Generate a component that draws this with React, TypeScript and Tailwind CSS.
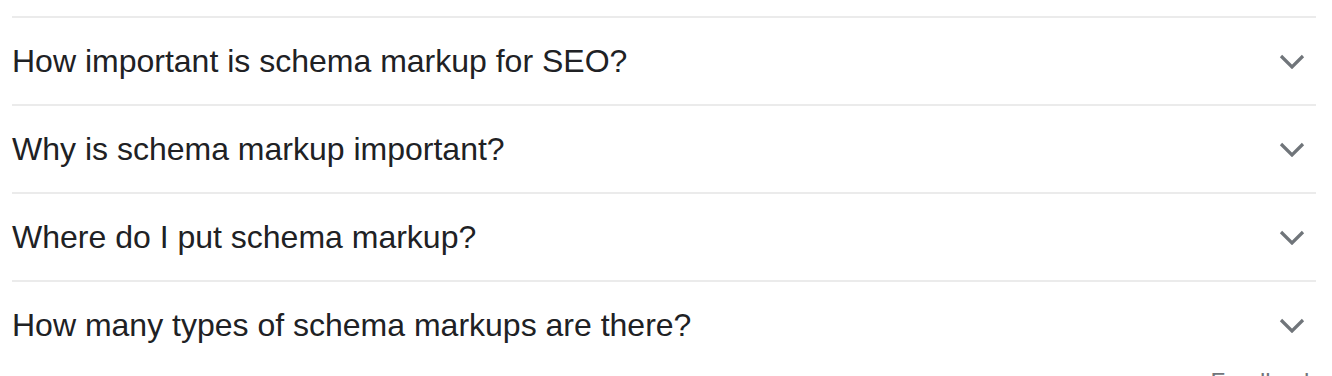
const questions = [
  "How important is schema markup for SEO?",
  "Why is schema markup important?",
  "Where do I put schema markup?",
  "How many types of schema markups are there?",
]

const Chevron = () => (
  <svg width="26" height="16" viewBox="0 0 26 16" className="shrink-0">
    <polyline points="2,3 13,14 24,3" fill="none" stroke="#70757a" strokeWidth="3.2" />
  </svg>
)

export default function App() {
  return (
    <div className="bg-white w-[1332px] h-[376px] overflow-hidden pt-[16px] pl-[12px] pr-[16px] font-['Liberation_Sans',Arial,sans-serif]">
      {questions.map((q) => (
        <div key={q} className="border-t-2 border-[#ebebeb] h-[88px] flex items-center justify-between pr-[11px]">
          <span className="text-[32px] leading-[40px] text-[#202124]">{q}</span>
          <Chevron />
        </div>
      ))}
      <div className="text-right text-[24px] leading-[28px] text-[#70757a]">Feedback</div>
    </div>
  )
}
